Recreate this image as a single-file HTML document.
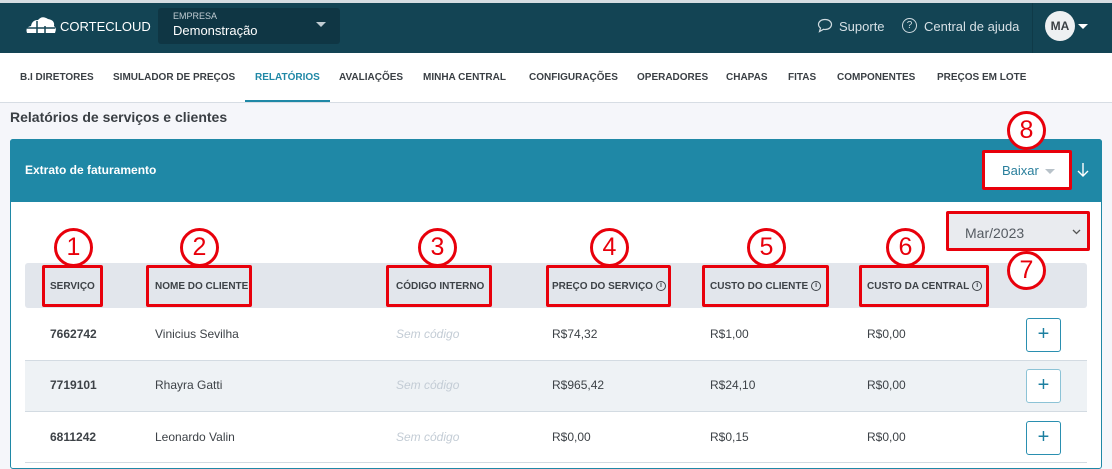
<!DOCTYPE html>
<html><head><meta charset="utf-8"><style>
*{box-sizing:border-box;margin:0;padding:0}
body{width:1112px;height:465px;overflow:hidden;background:#f5f6fa;font-family:"Liberation Sans",Arial,sans-serif;position:relative}
.a{position:absolute}
.top{left:0;top:0;width:1112px;height:53px;background:#134454;border-top:3px solid #d6dde2}
.nav{left:0;top:53px;width:1112px;height:50px;background:#fff;border-bottom:1px solid #d7dde4}
.nav span{position:absolute;top:19px;font-size:10px;font-weight:bold;color:#3a3f44;white-space:nowrap}
.rb{border:3px solid #e8000b;border-radius:2px}
.c{border:3px solid #e8000b;border-radius:50%;width:39px;height:39px;background:#fff;color:#e8000b;font-size:25px;text-align:center;line-height:33px}
.th{position:absolute;top:281px;font-size:10px;font-weight:bold;color:#3d4247;white-space:nowrap}
.td{position:absolute;font-size:12px;color:#3d4247;white-space:nowrap}
.pl{width:35px;height:34px;border:1px solid #2a8fb0;border-radius:3px;background:#fff;color:#1c7fa0;font-size:20px;text-align:center;line-height:31px}
.i{display:inline-block;width:10px;height:10px;border:1px solid #3d4247;border-radius:50%;font-size:7px;line-height:8px;text-align:center;vertical-align:middle;margin-left:3px}
</style></head><body>
<div class="a top"></div>
<svg class="a" style="left:25px;top:15px" width="32" height="20" viewBox="0 0 32 20"><path d="M2 18 Q0 12 6 11 Q7 5 13 5 Q17 0 23 4 Q30 5 29 11 Q32 13 30 18 Z" fill="#fff"/><path d="M2 13H30M12 6V18M20 11V18" stroke="#134454" stroke-width="1.5"/></svg>
<div class="a" style="left:60px;top:19px;color:#fff;font-size:13px">CORTECLOUD</div>
<div class="a" style="left:158px;top:8px;width:182px;height:36px;background:#0f3644;border-radius:3px"></div>
<div class="a" style="left:173px;top:11px;color:#c0ccd2;font-size:9px">EMPRESA</div>
<div class="a" style="left:173px;top:23px;color:#fff;font-size:13px">Demonstração</div>
<div class="a" style="left:316px;top:22px;border-left:5px solid transparent;border-right:5px solid transparent;border-top:5px solid #c0ccd2"></div>
<svg class="a" style="left:817px;top:18px" width="16" height="15" viewBox="0 0 16 15"><path d="M8 1.5C4 1.5 1.5 3.8 1.5 6.5C1.5 8 2.3 9.2 3.5 10L2.5 13.5L6.5 11.3C7 11.4 7.5 11.5 8 11.5C12 11.5 14.5 9.2 14.5 6.5C14.5 3.8 12 1.5 8 1.5Z" fill="none" stroke="#d0dbe0" stroke-width="1.2"/></svg>
<div class="a" style="left:839px;top:19px;color:#d6e0e5;font-size:13px">Suporte</div>
<div class="a" style="left:902px;top:18px;width:15px;height:15px;border:1.3px solid #d0dbe0;border-radius:50%;color:#d0dbe0;font-size:10px;text-align:center;line-height:13px">?</div>
<div class="a" style="left:924px;top:19px;color:#d6e0e5;font-size:13px">Central de ajuda</div>
<div class="a" style="left:1032px;top:3px;width:1px;height:50px;background:#0f3a48"></div>
<div class="a" style="left:1045px;top:11px;width:30px;height:30px;border-radius:50%;background:#eef0f2;color:#3a3f44;font-size:12px;font-weight:bold;text-align:center;line-height:30px">MA</div>
<div class="a" style="left:1078px;top:24px;border-left:5px solid transparent;border-right:5px solid transparent;border-top:5px solid #fff"></div>
<div class="a nav">
<span style="left:20px">B.I DIRETORES</span><span style="left:113px">SIMULADOR DE PREÇOS</span><span style="left:255px;color:#1f88a6">RELATÓRIOS</span><span style="left:339px">AVALIAÇÕES</span><span style="left:423px">MINHA CENTRAL</span><span style="left:529px">CONFIGURAÇÕES</span><span style="left:637px">OPERADORES</span><span style="left:726px">CHAPAS</span><span style="left:788px">FITAS</span><span style="left:837px">COMPONENTES</span><span style="left:937px">PREÇOS EM LOTE</span>
<div class="a" style="left:245px;top:47px;width:85px;height:2px;background:#1f88a6"></div>
</div>
<div class="a" style="left:10px;top:109px;font-size:14px;font-weight:bold;color:#3a3f44">Relatórios de serviços e clientes</div>
<div class="a" style="left:10px;top:139px;width:1092px;height:330px;background:#fff;border:1px solid #1f88a6;border-radius:3px"></div>
<div class="a" style="left:10px;top:139px;width:1092px;height:63px;background:#1f88a6;border-radius:3px 3px 0 0"></div>
<div class="a" style="left:25px;top:163px;color:#fff;font-size:12px;font-weight:bold">Extrato de faturamento</div>
<div class="a rb" style="left:982px;top:150px;width:90px;height:40px;background:#fff"></div>
<div class="a" style="left:1002px;top:163px;color:#2a7f9c;font-size:13px">Baixar</div>
<div class="a" style="left:1045px;top:169px;border-left:5px solid transparent;border-right:5px solid transparent;border-top:5px solid #b8c2c9"></div>
<svg class="a" style="left:1077px;top:162px" width="12" height="16" viewBox="0 0 12 16"><path d="M6 1V14M1 9L6 14L11 9" fill="none" stroke="#fff" stroke-width="1.4"/></svg>
<div class="a rb" style="left:946px;top:211px;width:144px;height:40px;background:#e9ebef"></div>
<div class="a" style="left:965px;top:225px;color:#555b62;font-size:14px">Mar/2023</div>
<svg class="a" style="left:1072px;top:229px" width="9" height="6" viewBox="0 0 9 6"><path d="M1 1L4.5 4.5L8 1" fill="none" stroke="#555" stroke-width="1.3"/></svg>
<div class="a" style="left:25px;top:263px;width:1062px;height:45px;background:#e2e6ec;border-radius:3px"></div>
<div class="a" style="left:25px;top:360px;width:1062px;height:51px;background:#eef2f5"></div>
<div class="a" style="left:25px;top:360px;width:1062px;height:1px;background:#d3dbe2"></div>
<div class="a" style="left:25px;top:411px;width:1062px;height:1px;background:#d3dbe2"></div>
<div class="a" style="left:25px;top:462px;width:1062px;height:1px;background:#d3dbe2"></div>
<div class="a rb" style="left:42px;top:265px;width:61px;height:42px"></div>
<div class="a rb" style="left:146px;top:265px;width:106px;height:42px"></div>
<div class="a rb" style="left:386px;top:265px;width:106px;height:42px"></div>
<div class="a rb" style="left:546px;top:265px;width:125px;height:42px"></div>
<div class="a rb" style="left:702px;top:265px;width:127px;height:42px"></div>
<div class="a rb" style="left:859px;top:265px;width:130px;height:42px"></div>
<div class="th" style="left:50px">SERVIÇO</div>
<div class="th" style="left:155px">NOME DO CLIENTE</div>
<div class="th" style="left:396px">CÓDIGO INTERNO</div>
<div class="th" style="left:552px">PREÇO DO SERVIÇO<span class="i">i</span></div>
<div class="th" style="left:710px">CUSTO DO CLIENTE<span class="i">i</span></div>
<div class="th" style="left:867px">CUSTO DA CENTRAL<span class="i">i</span></div>
<div class="a c" style="left:54px;top:228px">1</div>
<div class="a c" style="left:180px;top:228px">2</div>
<div class="a c" style="left:418px;top:228px">3</div>
<div class="a c" style="left:590px;top:228px">4</div>
<div class="a c" style="left:747px;top:228px">5</div>
<div class="a c" style="left:886px;top:228px">6</div>
<div class="a c" style="left:1007px;top:251px">7</div>
<div class="a c" style="left:1007px;top:111px">8</div>
<div class="td" style="left:50px;top:327px;font-weight:bold">7662742</div>
<div class="td" style="left:155px;top:327px">Vinicius Sevilha</div>
<div class="td" style="left:396px;top:327px;color:#c3ccd5;font-style:italic">Sem código</div>
<div class="td" style="left:552px;top:327px">R$74,32</div>
<div class="td" style="left:710px;top:327px">R$1,00</div>
<div class="td" style="left:867px;top:327px">R$0,00</div>
<div class="a pl" style="left:1026px;top:318px">+</div>
<div class="td" style="left:50px;top:378px;font-weight:bold">7719101</div>
<div class="td" style="left:155px;top:378px">Rhayra Gatti</div>
<div class="td" style="left:396px;top:378px;color:#c3ccd5;font-style:italic">Sem código</div>
<div class="td" style="left:552px;top:378px">R$965,42</div>
<div class="td" style="left:710px;top:378px">R$24,10</div>
<div class="td" style="left:867px;top:378px">R$0,00</div>
<div class="a pl" style="left:1026px;top:369px;border-color:#8cc3d6">+</div>
<div class="td" style="left:50px;top:430px;font-weight:bold">6811242</div>
<div class="td" style="left:155px;top:430px">Leonardo Valin</div>
<div class="td" style="left:396px;top:430px;color:#c3ccd5;font-style:italic">Sem código</div>
<div class="td" style="left:552px;top:430px">R$0,00</div>
<div class="td" style="left:710px;top:430px">R$0,15</div>
<div class="td" style="left:867px;top:430px">R$0,00</div>
<div class="a pl" style="left:1026px;top:421px">+</div>
</body></html>
